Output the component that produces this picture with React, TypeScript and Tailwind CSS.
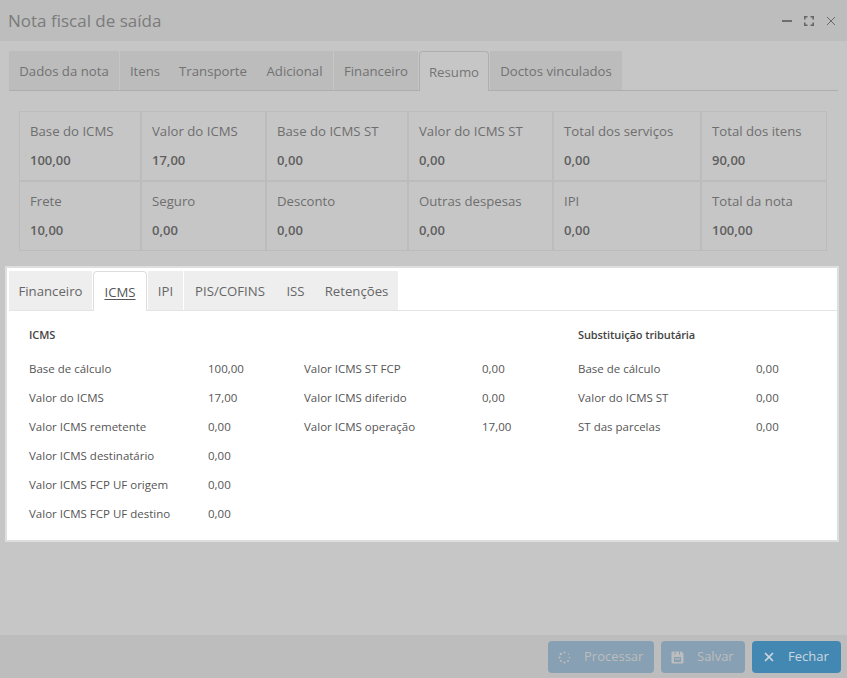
import { X } from "lucide-react";

type Tab = { label: string; width: string; gap?: boolean };

const topTabs: Tab[] = [
  { label: "Dados da nota", width: "w-[110px]", gap: true },
  { label: "Itens", width: "w-[50px]" },
  { label: "Transporte", width: "w-[86px]" },
  { label: "Adicional", width: "w-[77px]", gap: true },
  { label: "Financeiro", width: "w-[84px]", gap: true },
  { label: "Resumo", width: "w-[70px]", gap: true },
  { label: "Doctos vinculados", width: "w-[132px]" },
];

const innerTabs: Tab[] = [
  { label: "Financeiro", width: "w-[83px]", gap: true },
  { label: "ICMS", width: "w-[54px]", gap: true },
  { label: "IPI", width: "w-[35px]", gap: true },
  { label: "PIS/COFINS", width: "w-[92px]" },
  { label: "ISS", width: "w-[39px]" },
  { label: "Retenções", width: "w-[83px]" },
];

const summary = [
  [
    ["Base do ICMS", "100,00", "w-[122px]"],
    ["Valor do ICMS", "17,00", "w-[125px]"],
    ["Base do ICMS ST", "0,00", "w-[142px]"],
    ["Valor do ICMS ST", "0,00", "w-[145px]"],
    ["Total dos serviços", "0,00", "w-[148px]"],
    ["Total dos itens", "90,00", "w-[126px]"],
  ],
  [
    ["Frete", "10,00", "w-[122px]"],
    ["Seguro", "0,00", "w-[125px]"],
    ["Desconto", "0,00", "w-[142px]"],
    ["Outras despesas", "0,00", "w-[145px]"],
    ["IPI", "0,00", "w-[148px]"],
    ["Total da nota", "100,00", "w-[126px]"],
  ],
];

const columns = [
  {
    title: "ICMS",
    width: "w-[275px]",
    labelWidth: "w-[179px]",
    rows: [
      ["Base de cálculo", "100,00"],
      ["Valor do ICMS", "17,00"],
      ["Valor ICMS remetente", "0,00"],
      ["Valor ICMS destinatário", "0,00"],
      ["Valor ICMS FCP UF origem", "0,00"],
      ["Valor ICMS FCP UF destino", "0,00"],
    ],
  },
  {
    title: "",
    width: "w-[274px]",
    labelWidth: "w-[178px]",
    rows: [
      ["Valor ICMS ST FCP", "0,00"],
      ["Valor ICMS diferido", "0,00"],
      ["Valor ICMS operação", "17,00"],
    ],
  },
  {
    title: "Substituição tributária",
    width: "w-[240px]",
    labelWidth: "w-[178px]",
    rows: [
      ["Base de cálculo", "0,00"],
      ["Valor do ICMS ST", "0,00"],
      ["ST das parcelas", "0,00"],
    ],
  },
];

function Tabs({ items, active, highlighted }: { items: Tab[]; active: string; highlighted?: boolean }) {
  return (
    <div className={`flex h-10 border-b ${highlighted ? "border-[#e4e4e4]" : "border-[#aeaeae]"}`}>
      {items.map((tab) => {
        const isActive = tab.label === active;
        const base = highlighted ? "bg-[#eeeeee] text-[#666666]" : "bg-[#bcbcbc] text-[#727272]";
        const on = highlighted
          ? "h-10 rounded-t-sm border border-b-0 border-[#dddddd] bg-white text-[#555555] underline underline-offset-2"
          : "h-10 rounded-t-sm border border-b-0 border-[#aeaeae] bg-[#c6c6c6] text-[#757575]";
        return (
          <div
            key={tab.label}
            className={`flex shrink-0 items-center justify-center pt-[2px] text-[13.2px] ${tab.width} ${tab.gap ? "mr-px" : ""} ${isActive ? on : `${base} h-[39px]`}`}
          >
            {tab.label}
          </div>
        );
      })}
    </div>
  );
}

function Spinner() {
  return (
    <svg width="13" height="13" viewBox="0 0 13 13" fill="currentColor">
      <circle cx="6.5" cy="1.5" r="1" />
      <circle cx="10.5" cy="3.2" r="0.6" />
      <circle cx="11.5" cy="6.5" r="0.8" />
      <circle cx="10" cy="10" r="1" />
      <circle cx="6.5" cy="11.5" r="1" />
      <circle cx="2.8" cy="10" r="1" />
      <circle cx="1.5" cy="6.5" r="1.1" />
      <circle cx="2.8" cy="3" r="1.2" />
    </svg>
  );
}

function Floppy() {
  return (
    <svg width="13" height="13" viewBox="0 0 13 13">
      <path d="M1.5 0.5h9l2 2v9a1 1 0 0 1-1 1h-10a1 1 0 0 1-1-1v-10a1 1 0 0 1 1-1z" fill="currentColor" />
      <rect x="3.5" y="0.5" width="1" height="3" fill="#87a0b3" />
      <rect x="8" y="0.5" width="1" height="3" fill="#87a0b3" />
      <rect x="3" y="6" width="7" height="5" fill="#87a0b3" />
      <rect x="4" y="7.5" width="5" height="1" fill="currentColor" />
    </svg>
  );
}

export default function App() {
  return (
    <div className="flex h-[678px] w-[847px] flex-col overflow-hidden bg-[#c6c6c6] font-['Open_Sans',sans-serif]">
      <header className="flex h-[41px] shrink-0 items-center justify-between bg-[#bdbdbd] pl-2 pr-[11px]">
        <h1 className="text-[17px] text-[#7b7b7b]">Nota fiscal de saída</h1>
        <div className="flex items-center gap-3">
          <span className="h-[2px] w-[10px] bg-[#6f6f6f]" />
          <svg width="10" height="10" viewBox="0 0 10 10" fill="none" stroke="#666666" strokeWidth="1.6">
            <path d="M0.8 3.5V0.8H3.5M6.5 0.8H9.2V3.5M9.2 6.5V9.2H6.5M3.5 9.2H0.8V6.5" />
          </svg>
          <svg width="10" height="10" viewBox="0 0 10 10" fill="none" stroke="#6a6a6a" strokeWidth="1">
            <path d="M1 1L9 9M9 1L1 9" />
          </svg>
        </div>
      </header>

      <div className="flex-1">
        <div className="mx-[9px] mt-[10px]">
          <Tabs items={topTabs} active="Resumo" />
        </div>

        <div className="mx-[19px] mt-5 w-[808px]">
          {summary.map((row, i) => (
            <div key={i} className="flex">
              {row.map(([label, value, width]) => (
                <div key={label} className={`${width} h-[70px] border border-[#bcbcbc] pl-[10px] pt-[10px] text-[#6e6e6e]`}>
                  <div className="text-[13.2px] leading-[18px]">{label}</div>
                  <div className="mt-[11px] text-[13px] font-semibold leading-[18px] text-[#5f5f5f]">{value}</div>
                </div>
              ))}
            </div>
          ))}
        </div>

        <section className="ml-[5px] mt-[15px] h-[276px] w-[834px] border-2 border-[#dedede] bg-white pl-[2px] pt-[3px]">
          <Tabs items={innerTabs} active="ICMS" highlighted />
          <div className="flex pl-5 pt-[15px]">
            {columns.map((col, i) => (
              <div key={i} className={col.width}>
                <h2 className="h-[18px] text-[11px] font-semibold leading-[18px] tracking-[-0.1px] text-[#444444]">{col.title}</h2>
                <div className="mt-[10px] flex flex-col">
                  {col.rows.map(([label, value]) => (
                    <div key={label} className="flex h-[29px] items-center text-[11.5px] text-[#555555]">
                      <span className={`${col.labelWidth} shrink-0`}>{label}</span>
                      <span>{value}</span>
                    </div>
                  ))}
                </div>
              </div>
            ))}
          </div>
        </section>
      </div>

      <footer className="flex h-[43px] shrink-0 items-start justify-end gap-[7px] bg-[#bdbdbd] pr-[6px] pt-[6px] text-[13px]">
        <button className="flex h-8 w-[106px] items-center rounded-sm bg-[#87a0b3] pl-[10px] text-[#bdbdbd]">
          <Spinner />
          <span className="ml-[13px]">Processar</span>
        </button>
        <button className="flex h-8 w-[84px] items-center rounded-sm bg-[#87a0b3] pl-[10px] text-[#bdbdbd]">
          <Floppy />
          <span className="ml-[13px]">Salvar</span>
        </button>
        <button className="flex h-8 w-[89px] items-center rounded-sm bg-[#4388b3] pl-[10px] text-[#cdd6dc]">
          <X size={14} strokeWidth={3} />
          <span className="ml-[12px]">Fechar</span>
        </button>
      </footer>
    </div>
  );
}
